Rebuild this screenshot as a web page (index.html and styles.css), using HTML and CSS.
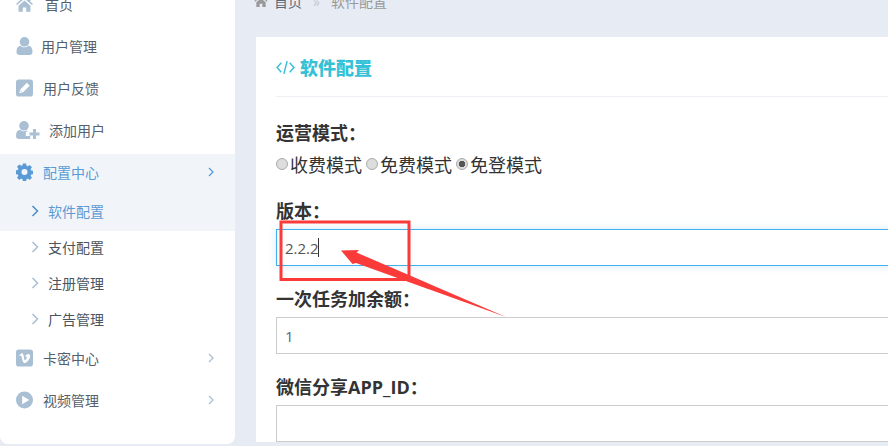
FILE: index.html
```html
<!DOCTYPE html>
<html lang="zh-CN">
<head>
    <meta charset="UTF-8">
    <meta name="viewport" content="width=device-width, initial-scale=1.0">
    <title>软件配置</title>
    <link rel="stylesheet" href="styles.css">
</head>
<body>
    <div class="layout">
        <aside class="sidebar">
            <a class="menu-item menu-home">
                <svg class="menu-icon" viewBox="0 0 20 18"><path d="M10 0L0 9l1.200 1.300L10 2.600l8.800 7.700L20 9l-3-2.700V1h-3v2.600zM3 11v7h5v-5h4v5h5v-7l-7-6z"/></svg>
                <span>首页</span>
            </a>
            <a class="menu-item menu-user">
                <svg class="menu-icon" viewBox="0 0 16 18"><circle cx="8" cy="4.800" r="4.800"/><path d="M0 15c0-4 1.500-6 4-6.200 1 1 2.500 1.500 4 1.500s3-.5 4-1.500c2.500.2 4 2.200 4 6.200 0 2-1.200 3-3 3H3c-1.800 0-3-1-3-3z"/></svg>
                <span>用户管理</span>
            </a>
            <a class="menu-item menu-edit">
                <svg class="menu-icon" viewBox="0 0 18 18"><path fill-rule="evenodd" d="M3 0h12a3 3 0 0 1 3 3v12a3 3 0 0 1-3 3H3a3 3 0 0 1-3-3V3a3 3 0 0 1 3-3zM11.500 3.500L4.500 10.500l-1 4 4-1 7-7zM4.800 12.900l.4-1.500 1.100 1.100z"/></svg>
                <span>用户反馈</span>
            </a>
            <a class="menu-item menu-add">
                <svg class="menu-icon icon-wide" viewBox="0 0 24 18"><circle cx="8" cy="4.800" r="4.800"/><path d="M0 15c0-4 1.500-6 4-6.200 1 1 2.500 1.500 4 1.500s2.400-.4 3.200-1V11h-1.400v4h4.400v3H3c-1.800 0-3-1-3-3z"/><path d="M17 8h3v3.500h3.500v3H20V18h-3v-3.500h-3.500v-3H17z"/></svg>
                <span>添加用户</span>
            </a>
            <div class="menu-group">
                <a class="menu-item menu-active">
                    <svg class="menu-icon" viewBox="0 0 18 18"><path fill-rule="evenodd" d="M7.300 0h3.400l.4 2.400 1.400.6 2-1.400 2.400 2.400-1.400 2 .6 1.400 2.400.4v3.400l-2.400.4-.6 1.400 1.400 2-2.400 2.400-2-1.400-1.400.6-.4 2.400H7.300l-.4-2.400-1.400-.6-2 1.400-2.400-2.400 1.400-2-.6-1.400-2.400-.4V7.300l2.400-.4.600-1.400-1.400-2 2.400-2.400 2 1.400 1.400-.6zM9 5.800a3.200 3.200 0 1 0 0 6.400 3.200 3.200 0 0 0 0-6.400z"/></svg>
                    <span>配置中心</span>
                    <svg class="menu-arrow" viewBox="0 0 6 10"><path d="M1 1l4 4-4 4"/></svg>
                </a>
                <a class="sub-item sub-active">
                    <svg class="sub-arrow" viewBox="0 0 8 12"><path d="M1.500 1l5 5-5 5"/></svg>
                    <span>软件配置</span>
                </a>
            </div>
            <a class="sub-item">
                <svg class="sub-arrow" viewBox="0 0 8 12"><path d="M1.500 1l5 5-5 5"/></svg>
                <span>支付配置</span>
            </a>
            <a class="sub-item">
                <svg class="sub-arrow" viewBox="0 0 8 12"><path d="M1.500 1l5 5-5 5"/></svg>
                <span>注册管理</span>
            </a>
            <a class="sub-item sub-last">
                <svg class="sub-arrow" viewBox="0 0 8 12"><path d="M1.500 1l5 5-5 5"/></svg>
                <span>广告管理</span>
            </a>
            <a class="menu-item menu-card">
                <svg class="menu-icon" viewBox="0 0 18 18"><path fill-rule="evenodd" d="M3 0h12a3 3 0 0 1 3 3v12a3 3 0 0 1-3 3H3a3 3 0 0 1-3-3V3a3 3 0 0 1 3-3zM3.400 6.300l.5.700c1-.7 1.500-.8 1.800.1l1.500 5.300c.4 1 1 1.900 2 1.900 1.600 0 3.500-1.700 5-4.500 1.200-2.300 1.200-5-1.200-5.100-1.600 0-2.800 1-3.400 3 1.200-.5 2-.2 1.800 1-.2 1-1.300 2.700-1.900 2.700-.7 0-1-2.500-1.400-4.500C7.800 5 7.400 3.900 6.300 4 5.300 4.100 4.300 5.400 3.400 6.300z"/></svg>
                <span>卡密中心</span>
                <svg class="menu-arrow" viewBox="0 0 6 10"><path d="M1 1l4 4-4 4"/></svg>
            </a>
            <a class="menu-item menu-video">
                <svg class="menu-icon" viewBox="0 0 18 18"><path fill-rule="evenodd" d="M9 0a9 9 0 1 1 0 18A9 9 0 0 1 9 0zM6.500 4.500v9l7.500-4.500z"/></svg>
                <span>视频管理</span>
                <svg class="menu-arrow" viewBox="0 0 6 10"><path d="M1 1l4 4-4 4"/></svg>
            </a>
        </aside>

        <main class="content">
            <div class="breadcrumb">
                <svg class="crumb-home" viewBox="0 0 20 18"><path d="M10 0L0 9l1.200 1.300L10 2.600l8.800 7.700L20 9l-3-2.700V1h-3v2.600zM3 11v7h5v-5h4v5h5v-7l-7-6z"/></svg>
                <span class="crumb-link">首页</span>
                <span class="crumb-sep">»</span>
                <span class="crumb-current">软件配置</span>
            </div>
            <section class="card">
                <h2 class="card-title">
                    <svg class="title-icon" viewBox="0 0 18 14"><path d="M5 2.500L1 7l4 4.500M13 2.500L17 7l-4 4.500M10.500 1L7.500 13"/></svg>
                    <span>软件配置</span>
                </h2>
                <div class="form-group">
                    <label class="form-label">运营模式：</label>
                    <div class="radio-row">
                        <label class="radio"><input type="radio" name="mode">收费模式</label>
                        <label class="radio"><input type="radio" name="mode">免费模式</label>
                        <label class="radio"><input type="radio" name="mode" checked>免登模式</label>
                    </div>
                </div>
                <div class="form-group">
                    <label class="form-label">版本：</label>
                    <div class="input-wrap">
                        <input class="form-input input-focus" type="text" value="2.2.2">
                        <i class="caret"></i>
                    </div>
                </div>
                <div class="form-group">
                    <label class="form-label">一次任务加余额：</label>
                    <input class="form-input" type="text" value="1">
                </div>
                <div class="form-group">
                    <label class="form-label">微信分享APP_ID：</label>
                    <input class="form-input" type="text">
                </div>
            </section>
        </main>
    </div>

    <!-- 截图上的红色标注 -->
    <svg class="annotation" viewBox="0 0 888 446">
        <rect x="281" y="222" width="128" height="57.500" fill="none" stroke="#fb3a3a" stroke-width="3"/>
        <path d="M341 250.500L359 250L356.500 252.500L506 317L356 263L352.500 264z" fill="#fb3a3a"/>
    </svg>
</body>
</html>
```

FILE: styles.css
```css
* {
    box-sizing: border-box;
}
html, body {
    height: 100%;
}
body {
    margin: 0;
    background: #e7ebf3;
    color: #333;
    font-family: "Open Sans", "Noto Sans CJK SC", sans-serif;
    overflow: hidden;
    position: relative;
}
.layout {
    display: flex;
    align-items: flex-start;
    margin-top: -16px;
}
.sidebar {
    flex: 0 0 235px;
    height: 460px;
    background: white;
    border-radius: 0 0 8px 8px;
    padding-top: 2px;
}
.menu-item {
    display: flex;
    align-items: center;
    height: 36px;
    margin-bottom: 6px;
    padding-left: 16px;
    font-size: 14px;
    color: #55606c;
}
.menu-icon {
    width: 17px;
    height: 18px;
    fill: #a9bfd3;
    flex: none;
}
.icon-wide {
    width: 24px;
}
.menu-item span {
    margin-left: 10px;
}
.menu-home span {
    margin-left: 12px;
}
.menu-user span {
    margin-left: 8px;
}
.menu-add span {
    margin-left: 9px;
}
.menu-arrow {
    width: 6px;
    height: 10px;
    margin-left: auto;
    margin-right: 21px;
    fill: none;
    stroke: #a9bfd3;
    stroke-width: 1.300;
}
.menu-group {
    background: #f1f5f9;
    padding-bottom: 2px;
    margin-bottom: -2px;
}
.menu-active {
    margin-bottom: 3px;
    color: #5b9bd5;
}
.menu-active .menu-icon {
    fill: #5b9bd5;
}
.menu-active .menu-arrow {
    stroke: #5b9bd5;
}
.sub-item {
    display: flex;
    align-items: center;
    height: 36px;
    padding-left: 31px;
    font-size: 14px;
    color: #4a5560;
}
.sub-item span {
    margin-left: 9px;
}
.sub-arrow {
    width: 8px;
    height: 12px;
    fill: none;
    stroke: #a9bfd3;
    stroke-width: 1.500;
}
.sub-last {
    margin-bottom: 3px;
}
.sub-active {
    color: #5b9bd5;
}
.sub-active .sub-arrow {
    stroke: #4a8cc7;
}
.content {
    flex: 1;
    min-width: 0;
    padding-left: 19px;
}
.breadcrumb {
    display: flex;
    align-items: center;
    height: 34px;
    font-size: 14px;
    color: #999;
}
.crumb-home {
    width: 14px;
    height: 12px;
    fill: #999;
    margin-right: 6px;
}
.crumb-link {
    color: #5a6a7a;
}
.crumb-sep {
    margin: 0 11px 0 11px;
    color: #c5c9cf;
}
.card {
    width: 700px;
    margin-top: 19px;
    margin-left: 2px;
    padding: 0 0 0 20px;
    background: white;
}
.card-title {
    display: flex;
    align-items: center;
    height: 60px;
    margin: 0 0 22px;
    padding-top: 1px;
    border-bottom: 1px solid #edf0f5;
    font-size: 18px;
    font-weight: 900;
    color: #37c1d6;
}
.title-icon {
    width: 19px;
    height: 15px;
    margin-right: 5px;
    fill: none;
    stroke: #37c1d6;
    stroke-width: 1.400;
}
.form-group {
    margin-bottom: 19px;
}
.form-label {
    display: block;
    height: 28px;
    margin-bottom: 4px;
    line-height: 28px;
    font-size: 18px;
    font-weight: bold;
    color: #333;
}
.radio-row {
    display: flex;
    align-items: center;
    height: 27px;
    padding-bottom: 2px;
    font-size: 18px;
    color: #333;
}
.radio {
    display: flex;
    align-items: center;
    margin-right: 4px;
}
.radio input {
    appearance: none;
    width: 12px;
    height: 12px;
    margin: 0 2px 0 0;
    border: 1px solid #aaa;
    border-radius: 50%;
    background: #ddd;
}
.radio input:checked {
    background: radial-gradient(circle, #555 0 3px, #ddd 3.500px);
}
.input-wrap {
    position: relative;
}
.form-input {
    display: block;
    width: 100%;
    height: 37px;
    padding: 0 8px;
    border: 1px solid #ccc;
    outline: none;
    font-family: inherit;
    font-size: 15px;
    color: #4f6a85;
}
.input-focus {
    border-color: #42b0ec;
    box-shadow: 0 0 8px rgba(102, 175, 233, 0.25);
    color: #555;
}
.caret {
    position: absolute;
    left: 42px;
    top: 9px;
    width: 1px;
    height: 19px;
    background: #333;
}
.annotation {
    position: absolute;
    left: 0;
    top: 0;
    width: 888px;
    height: 446px;
    pointer-events: none;
}
```
